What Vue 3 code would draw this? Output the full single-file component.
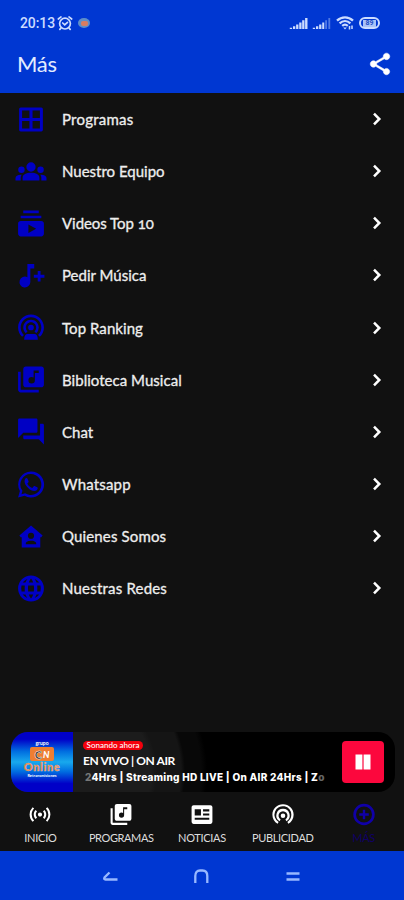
<template>
  <div class="screen">
    <header class="top">
      <div class="status">
        <span class="clock">20:13</span>
        <svg class="alarm" viewBox="0 0 16 16" fill="none" stroke="currentColor" stroke-width="1.7" stroke-linecap="round">
          <circle cx="8" cy="8.6" r="5.4"/>
          <path d="M1.300 4 4 1.900M14.700 4 12 1.900M5.700 8l2 1.900 2.800-2.600M4 13l-1.200 1.400M12 13l1.200 1.400"/>
        </svg>
        <span class="app-dot"><i></i></span>
        <span class="spacer"></span>
        <svg class="signal" viewBox="0 0 20 12" fill="currentColor">
          <path d="M.5 10.500h2.500V12H.5zM4 9h2.500v3H4zM7.400 7h2.500v5H7.400zM10.800 4.800h2.500V12h-2.500zM14 2.500h2.500V12H14zM17.200 0h2.600v12h-2.600z"/>
        </svg>
        <svg class="signal second" viewBox="0 0 20 12" fill="currentColor">
          <path d="M.5 10.500h2.500V12H.5zM4 9h2.500v3H4zM7.400 7h2.500v5H7.400zM10.800 4.800H13V12h-2.200z"/>
          <path opacity=".4" d="M14 2.500h2V12h-2zM17.500 0h2v12h-2z"/>
        </svg>
        <svg class="wifi" viewBox="0 0 18 14" fill="none" stroke="currentColor" stroke-width="2.300">
          <path d="M1 4.600C5.600.2 12.400.2 17 4.600M3.600 7.300c3.200-3 7.600-3 10.800 0M6.200 9.900c1.700-1.500 3.900-1.500 5.600 0"/>
          <path d="M9 13.500 7.200 11.400h3.600z" fill="currentColor" stroke="none"/>
          <path d="M13.500 10v3.500M16 9.500V13" stroke-width="1.500"/>
        </svg>
        <span class="battery"><span>89</span></span>
      </div>
      <div class="title-bar">
        <h1>Más</h1>
        <svg class="share" viewBox="0 0 24 24" fill="currentColor" stroke="currentColor" stroke-width=".5"><path :d="icons.share"/></svg>
      </div>
    </header>

    <main class="menu">
      <div v-for="item in menu" :key="item.label" class="row">
        <svg class="row-icon" viewBox="0 0 24 24" fill="currentColor" fill-rule="evenodd"><path :d="icons[item.icon]"/></svg>
        <span class="row-label" :style="{ letterSpacing: item.spacing + 'px' }">{{ item.label }}</span>
        <svg class="chevron" viewBox="0 0 12 16" fill="none" stroke="currentColor" stroke-width="2.500"><path d="M3 2.700 8.300 8 3 13.300"/></svg>
      </div>
    </main>

    <section class="player">
      <div class="cover">
        <span class="cover-top">grupo</span>
        <span class="cover-mark"><b>C</b><em>N</em></span>
        <span class="cover-name">Online</span>
        <span class="cover-sub">Retransmisiones</span>
      </div>
      <div class="info">
        <span class="badge">Sonando ahora</span>
        <span class="now">EN VIVO | ON AIR</span>
        <span class="ticker"><i>2</i>4Hrs | Streaming HD LIVE | On AIR 24Hrs | Z<i>o</i></span>
      </div>
      <button class="pause" aria-label="Pausa">
        <svg viewBox="0 0 16 16" fill="#fff"><path d="M.5.500h6.900v15H.5zM8.600.500h6.900v15H8.600z"/></svg>
      </button>
    </section>

    <nav class="tabs">
      <div v-for="tab in tabs" :key="tab.label" :class="['tab', { active: tab.active }]">
        <svg viewBox="0 0 24 24" fill="currentColor" fill-rule="evenodd"><path :d="icons[tab.icon]"/></svg>
        <span :style="{ letterSpacing: tab.spacing + 'px' }">{{ tab.label }}</span>
      </div>
    </nav>

    <footer class="system">
      <svg viewBox="0 0 18 18"><path d="M7.500 4.500 2.500 9.500Q1.500 11.500 3.500 11.500H15.500"/></svg>
      <svg viewBox="0 0 18 18"><path d="M2.300 15V8Q2.300 2.500 7 2.500h2.500Q14.300 2.500 14.300 8v7"/></svg>
      <svg viewBox="0 0 18 18"><path d="M2.500 5.500h13M2.500 11.500h13"/></svg>
    </footer>
  </div>
</template>

<script setup>
const icons = {
  share: 'M18 16.080c-.76 0-1.440.3-1.960.77L8.910 12.700c.05-.23.09-.46.09-.7s-.04-.47-.09-.7l7.050-4.110c.54.5 1.250.81 2.040.81 1.660 0 3-1.340 3-3s-1.340-3-3-3-3 1.340-3 3c0 .24.04.47.09.7L8.040 9.810C7.500 9.310 6.790 9 6 9c-1.660 0-3 1.340-3 3s1.340 3 3 3c.79 0 1.500-.31 2.040-.81l7.120 4.160c-.05.21-.08.43-.08.65 0 1.610 1.310 2.920 2.920 2.920s2.920-1.310 2.920-2.920-1.310-2.920-2.920-2.920z',
  grid: 'M4 2.800h16Q21.200 2.800 21.200 4v16Q21.200 21.200 20 21.200H4Q2.800 21.200 2.800 20V4Q2.800 2.800 4 2.800zM5.100 5.100V10.800h5.700V5.100zM13.200 5.100v5.700h5.700V5.100zM5.100 13.200v5.700h5.700v-5.700zM13.200 13.200v5.700h5.700v-5.700z',
  groups: 'M12 13c2 0 3.500.4 4.600 1 1.200.6 1.900 1.700 1.900 2.900V19h-13v-2.100c0-1.200.7-2.300 1.900-2.900 1.100-.6 2.600-1 4.600-1zM4.600 13.200a2.500 2.500 0 1 0 0-5 2.500 2.500 0 0 0 0 5zM4.800 14.500C2 14.200 0 15.400 0 17v2h4v-2.200c0-.9.300-1.700.8-2.300zM19.400 13.200a2.500 2.500 0 1 0 0-5 2.500 2.500 0 0 0 0 5zM19.200 14.500c2.800-.3 4.800.9 4.800 2.500v2h-4v-2.200c0-.9-.3-1.700-.8-2.300zM12 4.900a3.600 3.600 0 1 1 0 7.200 3.600 3.600 0 0 1 0-7.200z',
  videos: 'M20 8H4V6h16v2zm-2-6H6v2h12V2zm4 10v8c0 1.100-.9 2-2 2H4c-1.100 0-2-.9-2-2v-8c0-1.100.9-2 2-2h16c1.100 0 2 .9 2 2zm-6 4l-6-3.270v6.530L16 16z',
  noteAdd: 'M9.200 3h5.300v3.600h-3V17a4.200 4.200 0 1 1-2.300-3.700zM17.200 8.500h2.200v3h3v2.200h-3v3h-2.200v-3h-3v-2.200h3z',
  podcast: 'M14.200 12a2.200 2.200 0 1 1-4.400 0 2.200 2.200 0 0 1 4.400 0zm-2.200-6c-3.310 0-6 2.690-6 6 0 1.740.75 3.310 1.940 4.400l1.420-1.420A3.957 3.957 0 0 1 8 12c0-2.210 1.790-4 4-4s4 1.790 4 4c0 1.190-.53 2.250-1.360 2.980l1.420 1.420A5.957 5.957 0 0 0 18 12c0-3.310-2.690-6-6-6zm0-4C6.480 2 2 6.480 2 12c0 2.850 1.200 5.410 3.110 7.240l1.420-1.420A7.987 7.987 0 0 1 4 12c0-4.410 3.590-8 8-8s8 3.590 8 8c0 2.290-.98 4.360-2.530 5.820l1.420 1.420C20.800 17.410 22 14.850 22 12c0-5.520-4.480-10-10-10zM9.300 17h5.400c1.600 0 2.600 1.500 2.600 4.500H6.700c0-3 1-4.500 2.600-4.500z',
  library: 'M20 2H8c-1.100 0-2 .9-2 2v12c0 1.100.9 2 2 2h12c1.100 0 2-.9 2-2V4c0-1.100-.9-2-2-2zm-2 5h-3v5.500a2.500 2.500 0 1 1-2.500-2.500c.57 0 1.080.19 1.500.51V5h4v2zM4 6H2v14c0 1.100.9 2 2 2h14v-2H4V6z',
  chat: 'M21 6h-2v9H6v2c0 .55.45 1 1 1h11l4 4V7c0-.55-.45-1-1-1zm-4 6V3c0-.55-.45-1-1-1H3c-.55 0-1 .45-1 1v14l4-4h10c.55 0 1-.45 1-1z',
  whatsapp: 'M12 2a10 10 0 0 0-8.600 15L2 22l5.100-1.350A10 10 0 1 0 12 2zm0 1.900a8.100 8.100 0 1 1-4.500 14.900l-2.900.8.800-2.750A8.100 8.100 0 0 1 12 3.900zM8.500 7c-.5 0-1.500.8-1.500 2.400 0 3.500 4.600 7.600 7.600 7.600 1.400 0 2.600-.9 2.600-2.100 0-.4-.1-.6-.4-.7l-2-1c-.3-.1-.5-.1-.7.2l-.9 1.100c-.2.2-.4.2-.7.1-1.400-.6-2.500-1.700-3.200-2.900-.2-.3-.1-.5.1-.7l.6-.8c.2-.2.2-.4.1-.7l-.8-2c-.2-.4-.4-.5-.8-.5z',
  house: 'M12 3.500l9 7.800-1.200 1.500-.6-.4V20.500H4.800V12.400l-.6.4L3 11.300zM12 9a2.400 2.400 0 1 0 0 4.800A2.400 2.400 0 0 0 12 9zM8 18h8v-.7c0-1.500-2.200-2.100-4-2.100s-4 .6-4 2.100z',
  globe: 'M12 2a10 10 0 1 0 0 20 10 10 0 0 0 0-20zM9.200 4.700C8.500 5.600 8 6.500 7.700 7.400H5.600c.9-1.200 2.200-2.100 3.600-2.700zM12 4.300c.7.900 1.300 1.900 1.700 3.100h-3.400C10.700 6.200 11.300 5.200 12 4.300zm2.800.4c1.400.6 2.700 1.500 3.600 2.700h-2.100c-.3-.9-.8-1.800-1.500-2.700zM4.700 9.700h2.500a19 19 0 0 0 0 4.600H4.700a8 8 0 0 1 0-4.600zm5.100 0h4.400a17 17 0 0 1 0 4.600H9.800a17 17 0 0 1 0-4.600zm7 0h2.500a8 8 0 0 1 0 4.600h-2.500a19 19 0 0 0 0-4.600zM5.600 16.600h2.100c.3.900.8 1.800 1.500 2.700-1.400-.6-2.700-1.500-3.600-2.700zm4.700 0h3.400c-.4 1.200-1 2.200-1.700 3.100-.7-.9-1.300-1.900-1.700-3.100zm6 0h2.100c-.9 1.200-2.200 2.100-3.600 2.700.7-.9 1.200-1.800 1.500-2.700z',
  live: 'M7.760 16.240C6.670 15.160 6 13.660 6 12s.67-3.160 1.760-4.240l1.420 1.420C8.450 9.900 8 10.900 8 12s.45 2.100 1.170 2.830l-1.410 1.410zm8.480 0C17.330 15.160 18 13.660 18 12s-.67-3.160-1.760-4.240l-1.420 1.420C15.550 9.900 16 10.900 16 12s-.45 2.100-1.170 2.830l1.410 1.410zM12 10c-1.100 0-2 .9-2 2s.9 2 2 2 2-.9 2-2-.9-2-2-2zm8 2c0 2.210-.9 4.210-2.350 5.650l1.420 1.420A9.969 9.969 0 0 0 22 12c0-2.760-1.120-5.260-2.930-7.070l-1.420 1.420A7.946 7.946 0 0 1 20 12zM6.350 6.350 4.930 4.930A9.969 9.969 0 0 0 2 12c0 2.760 1.120 5.260 2.930 7.070l1.420-1.420A7.946 7.946 0 0 1 4 12c0-2.210.9-4.210 2.350-5.650z',
  news: 'M4 3h16c1.100 0 2 .9 2 2v14c0 1.100-.9 2-2 2H4c-1.100 0-2-.9-2-2V5c0-1.100.9-2 2-2zm1 4v6h6V7zm8 0v2h6V7zm0 4v2h6v-2zm-8 4v2h14v-2z',
  tether: 'M12 11a2.200 2.200 0 1 0 0 4.400 2.200 2.200 0 0 0 0-4.400zM12 6.600a6.400 6.400 0 0 0-3.300 11.900l1-1.800a4.300 4.300 0 1 1 4.600 0l1 1.800A6.400 6.400 0 0 0 12 6.600zM12 2.200C6.500 2.200 1.800 6.700 1.800 12.200c0 3.700 2 7 5 8.700l1-1.800A8.100 8.100 0 1 1 20 12.300c0 3-1.500 5.400-3.800 6.800l1 1.800c3-1.700 5-5 5-8.700 0-5.500-4.700-10-10.200-10z',
  plus: 'M12 1.300a10.700 10.700 0 1 0 0 21.400 10.700 10.700 0 0 0 0-21.400zm0 2.700a8 8 0 1 1 0 16 8 8 0 0 1 0-16zM10.800 7.200h2.400v3.600h3.600v2.400h-3.600v3.600h-2.400v-3.600H7.200v-2.400h3.600z'
}

const menu = [
  { label: 'Programas', icon: 'grid', spacing: 0.22 },
  { label: 'Nuestro Equipo', icon: 'groups', spacing: 0 },
  { label: 'Videos Top 10', icon: 'videos', spacing: -0.05 },
  { label: 'Pedir Música', icon: 'noteAdd', spacing: 0 },
  { label: 'Top Ranking', icon: 'podcast', spacing: 0.06 },
  { label: 'Biblioteca Musical', icon: 'library', spacing: 0.03 },
  { label: 'Chat', icon: 'chat', spacing: 0 },
  { label: 'Whatsapp', icon: 'whatsapp', spacing: 0.18 },
  { label: 'Quienes Somos', icon: 'house', spacing: 0.14 },
  { label: 'Nuestras Redes', icon: 'globe', spacing: 0.2 }
]

const tabs = [
  { label: 'INICIO', icon: 'live', spacing: -0.25 },
  { label: 'PROGRAMAS', icon: 'library', spacing: -0.4 },
  { label: 'NOTICIAS', icon: 'news', spacing: -0.3 },
  { label: 'PUBLICIDAD', icon: 'tether', spacing: -0.35 },
  { label: 'MÁS', icon: 'plus', spacing: -0.3, active: true }
]
</script>

<style>
body { margin: 0; background: #111; }
</style>

<style scoped>
* { box-sizing: border-box; }
.screen {
  height: 900px;
  display: flex;
  flex-direction: column;
  overflow: hidden;
  background: #111;
  color: #fff;
  font-family: Lato, "Open Sans", sans-serif;
}
.screen svg { display: block; flex-shrink: 0; }
.top { height: 93px; background: #0037d2; flex-shrink: 0; }
.status {
  height: 46px;
  padding: 0 24px 0 20px;
  display: flex;
  align-items: center;
  color: #ccdcff;
}
.clock { font: 500 14px Roboto, sans-serif; letter-spacing: -0.1px; }
.alarm { width: 16px; height: 16px; margin-left: 2px; }
.app-dot {
  width: 12px; height: 10px;
  margin-left: 5px;
  border-radius: 50%;
  background: #5d8ec9;
  display: flex;
  align-items: center;
  justify-content: center;
}
.app-dot i { width: 7px; height: 5px; background: #d77c61; border-radius: 2px; }
.spacer { flex: 1; }
.signal { width: 19px; height: 11px; }
.signal.second { margin-left: 4px; }
.wifi { width: 18px; height: 14px; margin-left: 5px; }
.battery {
  width: 21px; height: 12px;
  margin-left: 5px;
  border: 2px solid #ccdcff;
  border-radius: 6px;
  display: flex;
  align-items: center;
  justify-content: center;
}
.battery span {
  padding: 0 2px;
  background: #a9c2f7;
  color: #2450c5;
  font: 700 7px/7px Roboto, sans-serif;
}
.title-bar {
  height: 36px;
  padding: 0 11px 0 17px;
  display: flex;
  align-items: center;
  justify-content: space-between;
}
h1 { margin: -2px 0 0; font-size: 22px; font-weight: 400; letter-spacing: -0.3px; color: #e3ecff; }
.share { width: 26px; height: 26px; }
.menu { flex: 1; }
.row {
  height: 52.15px;
  padding: 0 21px 0 15px;
  display: flex;
  align-items: center;
}
.row-icon { width: 32px; height: 31px; color: #0000c4; }
.row-label {
  flex: 1;
  margin-left: 15px;
  font-size: 15px;
  font-variant-numeric: oldstyle-nums;
  white-space: nowrap;
  color: #eee;
  -webkit-text-stroke: 0.3px #eee;
}
.chevron { width: 12px; height: 16px; }
.player {
  height: 60px;
  margin: 0 9px 3px 11px;
  display: flex;
  align-items: center;
  border-radius: 17px;
  overflow: hidden;
  background: radial-gradient(circle at 62px 40px, #1c1c1c 0 78px, #151515 84px 108px, #080808 112px 128px, #000 134px);
  flex-shrink: 0;
}
.cover {
  width: 62px; height: 60px;
  display: flex;
  flex-direction: column;
  align-items: center;
  background: linear-gradient(#0000c8 12%, #006de0 32%, #18a9ed 50%, #006de0 66%, #0000c8 86%);
}
.cover-top { margin-top: 8px; font: 700 5px/6px Lato, sans-serif; }
.cover-mark {
  width: 24px; height: 14px;
  margin-top: 1px;
  background: #ee7e32;
  display: flex;
  align-items: center;
  justify-content: center;
  gap: 1px;
  font: 900 11px/11px Lato, sans-serif;
  border-radius: 2px;
}
.cover-mark b { color: #111; -webkit-text-stroke: 0.5px #fff; }
.cover-mark em { font-size: 9px; }
.cover-name {
  font: 900 11px/11px Lato, sans-serif;
  letter-spacing: 0.6px;
  color: #f07b35;
  -webkit-text-stroke: 0.4px #dbc3b8;
}
.cover-sub { margin-top: 1px; font: 700 4px/5px Lato, sans-serif; white-space: nowrap; }
.info {
  width: 245px; height: 100%;
  margin-left: 10px;
  padding-top: 9px;
  display: flex;
  flex-direction: column;
  align-items: flex-start;
  overflow: hidden;
}
.badge {
  width: 60px; height: 9px;
  border-radius: 5px;
  background: #f4000c;
  font: 500 8px/9px Lato, sans-serif;
  text-align: center;
  white-space: nowrap;
}
.now {
  margin-top: 4px;
  font: 700 12px/14px Lato, sans-serif;
  letter-spacing: -0.4px;
  white-space: nowrap;
}
.ticker {
  margin: 3px 0 0 2px;
  font: 800 10px/13px Inter, "Open Sans", sans-serif;
  white-space: nowrap;
  letter-spacing: 0.28px;
}
.ticker i { font-style: normal; opacity: 0.4; }
.pause {
  width: 42px; height: 42px;
  margin-left: auto;
  margin-right: 11px;
  padding: 0;
  border: none;
  border-radius: 4px;
  background: #fc073d;
  display: flex;
  align-items: center;
  justify-content: center;
}
.pause svg { width: 16px; height: 16px; }
.tabs { height: 56px; display: flex; flex-shrink: 0; }
.tab {
  flex: 1 1 0;
  min-width: 0;
  padding-top: 7px;
  display: flex;
  flex-direction: column;
  align-items: center;
}
.tab svg { width: 26px; height: 25px; }
.tab span { margin-top: 4px; font-size: 11px; line-height: 14px; white-space: nowrap; color: #ddd; }
.tab.active svg { color: #1000a8; width: 24px; }
.tab.active span { color: #100065; }
.system {
  height: 49px;
  padding: 2px 65px 0 65px;
  display: flex;
  align-items: center;
  justify-content: space-around;
  background: #0037d2;
  flex-shrink: 0;
}
.system svg { width: 18px; height: 18px; fill: none; stroke: #98b8ff; stroke-width: 2.3; }
</style>
